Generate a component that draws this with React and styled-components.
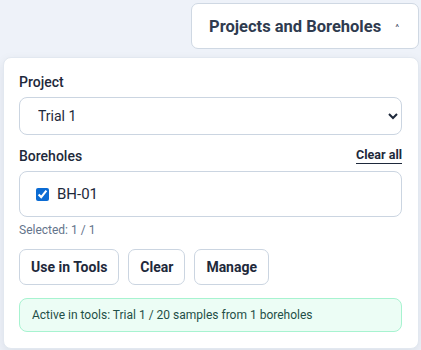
import React, { useState } from 'react';
import styled, { createGlobalStyle } from 'styled-components';

const GlobalStyle = createGlobalStyle`
  html, body {
    margin: 0;
    padding: 0;
    background: #eef2f9;
    font-family: Roboto, "Noto Sans", Arial, sans-serif;
    color: #1e293b;
  }
`;

const Page = styled.div`
  width: 421px;
  height: 350px;
  box-sizing: border-box;
  padding: 3px 2px 0 3px;
  display: flex;
  flex-direction: column;
  align-items: flex-end;
  gap: 8px;
  overflow: hidden;
`;

const Toggle = styled.button`
  flex-shrink: 0;
  width: 228px;
  height: 46px;
  box-sizing: border-box;
  display: flex;
  align-items: center;
  justify-content: space-between;
  padding: 0 19px 0 17px;
  background: #fff;
  border: 1px solid #cfd8e3;
  border-radius: 7px;
  font-family: inherit;
  font-size: 16.5px;
  font-weight: 700;
  color: #2f3b4f;
  cursor: pointer;
`;

const Caret = styled.span`
  font-size: 12px;
  color: #334155;
  transform: translateY(3px);
`;

const Panel = styled.div`
  flex-shrink: 0;
  align-self: stretch;
  background: #fff;
  border: 1px solid #e2e8f0;
  border-radius: 8px;
  box-shadow: 0 4px 12px rgba(15, 23, 42, 0.08);
  padding: 16px 16px 16px 15px;
  display: flex;
  flex-direction: column;
`;

const LabelRow = styled.div`
  display: flex;
  justify-content: space-between;
  align-items: flex-end;
  margin-bottom: 7px;
`;

const Label = styled.span`
  font-size: 14px;
  font-weight: 500;
  color: #1e293b;
`;

const ClearAll = styled.button`
  background: none;
  border: none;
  padding: 0 0 1px;
  border-bottom: 1.5px solid #1e293b;
  font-family: inherit;
  font-size: 12.5px;
  font-weight: 700;
  color: #1e293b;
  cursor: pointer;
`;

const Select = styled.select`
  height: 38px;
  width: 100%;
  box-sizing: border-box;
  border: 1px solid #cbd5e1;
  border-radius: 8px;
  padding: 0 10px 0 14px;
  font-family: inherit;
  font-size: 14px;
  color: #1e293b;
  background: #fff;
  margin-bottom: 12px;
`;

const ListBox = styled.div`
  height: 46px;
  box-sizing: border-box;
  border: 1px solid #cbd5e1;
  border-radius: 8px;
  display: flex;
  align-items: center;
  padding: 0 16px;
`;

const Item = styled.label`
  display: flex;
  align-items: center;
  gap: 8px;
  font-size: 15px;
  color: #1e293b;
`;

const Check = styled.input`
  width: 13px;
  height: 13px;
  margin: 0;
  accent-color: #0b6bd3;
`;

const Hint = styled.div`
  font-size: 12px;
  color: #64748b;
  margin: 6px 0 12px;
`;

const Buttons = styled.div`
  display: flex;
  gap: 9px;
  margin-bottom: 13px;
`;

const Button = styled.button`
  height: 36px;
  box-sizing: border-box;
  padding: 0 11px;
  background: #fff;
  border: 1px solid #cbd5e1;
  border-radius: 7px;
  font-family: inherit;
  font-size: 14px;
  font-weight: 700;
  color: #1e293b;
  cursor: pointer;
`;

const Status = styled.div`
  height: 34px;
  box-sizing: border-box;
  display: flex;
  align-items: center;
  padding: 0 12px;
  background: #ecfdf5;
  border: 1px solid #a7f3d0;
  border-radius: 8px;
  font-size: 12px;
  color: #1f4f47;
`;

export default function App() {
  const [checked, setChecked] = useState(true);
  return (
    <>
      <GlobalStyle />
      <Page>
        <Toggle>
          Projects and Boreholes
          <Caret>˄</Caret>
        </Toggle>
        <Panel>
          <LabelRow>
            <Label>Project</Label>
          </LabelRow>
          <Select defaultValue="trial1">
            <option value="trial1">Trial 1</option>
          </Select>
          <LabelRow>
            <Label>Boreholes</Label>
            <ClearAll>Clear all</ClearAll>
          </LabelRow>
          <ListBox>
            <Item>
              <Check type="checkbox" checked={checked} onChange={(e) => setChecked(e.target.checked)} />
              BH-01
            </Item>
          </ListBox>
          <Hint>Selected: 1 / 1</Hint>
          <Buttons>
            <Button>Use in Tools</Button>
            <Button>Clear</Button>
            <Button>Manage</Button>
          </Buttons>
          <Status>Active in tools: Trial 1 / 20 samples from 1 boreholes</Status>
        </Panel>
      </Page>
    </>
  );
}
